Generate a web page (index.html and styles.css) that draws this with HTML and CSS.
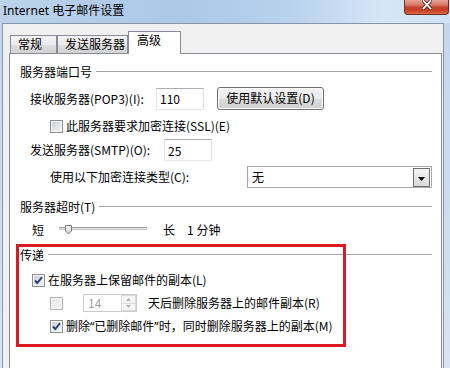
FILE: index.html
```html
<!DOCTYPE html>
<html lang="zh-CN">
<head>
    <meta charset="UTF-8">
    <meta name="viewport" content="width=device-width, initial-scale=1.0">
    <title>Internet 电子邮件设置</title>
    <link rel="stylesheet" href="styles.css">
</head>
<body>

<div class="window">
    <div class="titlebar">
        <span class="title">Internet 电子邮件设置</span>
        <span class="close-btn">
            <svg width="10" height="10" viewBox="0 0 10 10">
                <path d="M1.5 1 L8.5 8.5 M8.5 1 L1.5 8.5" stroke="#5b2219" stroke-width="3.4" stroke-linecap="square"/>
                <path d="M1.5 1 L8.5 8.5 M8.5 1 L1.5 8.5" stroke="#ffffff" stroke-width="1.8" stroke-linecap="square"/>
            </svg>
        </span>
    </div>

    <div class="client">
        <div class="tabs">
            <div class="tab tab-general">常规</div>
            <div class="tab tab-outgoing">发送服务器</div>
            <div class="tab tab-advanced active">高级</div>
        </div>

        <div class="panel">
            <div class="group-title">服务器端口号</div>

            <div class="row row-pop3">
                <span class="label-pop3">接收服务器(POP3)(I):</span>
                <input type="text" class="textbox" value="110">
                <span class="btn">使用默认设置(D)</span>
            </div>

            <div class="row row-ssl">
                <span class="check"></span>
                <span class="check-text">此服务器要求加密连接(SSL)(E)</span>
            </div>

            <div class="row row-smtp">
                <span class="label-smtp">发送服务器(SMTP)(O):</span>
                <input type="text" class="textbox" value="25">
            </div>

            <div class="row row-enc">
                <span class="label-enc">使用以下加密连接类型(C):</span>
                <div class="select">
                    <span class="select-value">无</span>
                    <span class="select-arrow">
                        <svg width="7" height="4" viewBox="0 0 7 4"><path d="M0 0 H7 L3.5 4 Z" fill="#000"/></svg>
                    </span>
                </div>
            </div>

            <div class="group-title group-timeout">服务器超时(T)</div>

            <div class="row row-slider">
                <span>短</span>
                <div class="slider">
                    <div class="slider-track"></div>
                    <svg class="slider-thumb" width="8" height="10" viewBox="0 0 8 10">
                        <defs>
                            <linearGradient id="thumbFill" x1="0" y1="0" x2="0" y2="1">
                                <stop offset="0" stop-color="#f4f4f4"/>
                                <stop offset="1" stop-color="#cfcfcf"/>
                            </linearGradient>
                        </defs>
                        <path d="M0.5 0.5 H6.5 V6 L3.5 9 L0.5 6 Z" fill="url(#thumbFill)" stroke="#7a7a7a"/>
                    </svg>
                </div>
                <span class="slider-long">长</span>
                <span class="slider-value">1 分钟</span>
            </div>

            <div class="group-title group-delivery">传递</div>

            <div class="row row-keep">
                <span class="check checked">
                    <svg width="11" height="11" viewBox="0 0 11 11"><path d="M2 5.5 L4.3 8 L9 2.2" fill="none" stroke="#2b3f7c" stroke-width="1.9"/></svg>
                </span>
                <span class="check-text">在服务器上保留邮件的副本(L)</span>
            </div>

            <div class="row row-days">
                <span class="check disabled"></span>
                <div class="spinner">
                    <span class="spinner-value">14</span>
                    <div class="spinner-buttons">
                        <span class="spin-up"><svg width="5" height="3" viewBox="0 0 5 3"><path d="M0 3 H5 L2.5 0 Z" fill="#b4b4b4"/></svg></span>
                        <span class="spin-down"><svg width="5" height="3" viewBox="0 0 5 3"><path d="M0 0 H5 L2.5 3 Z" fill="#b4b4b4"/></svg></span>
                    </div>
                </div>
                <span class="days-text">天后删除服务器上的邮件副本(R)</span>
            </div>

            <div class="row row-remove">
                <span class="check checked">
                    <svg width="11" height="11" viewBox="0 0 11 11"><path d="M2 5.5 L4.3 8 L9 2.2" fill="none" stroke="#2b3f7c" stroke-width="1.9"/></svg>
                </span>
                <span class="check-text">删除<span class="quote">“</span>已删除邮件<span class="quote">”</span>时，同时删除服务器上的副本(M)</span>
            </div>

            <!-- annotation box drawn over the delivery group -->
            <div class="highlight"></div>
        </div>
    </div>
</div>

</body>
</html>
```

FILE: styles.css
```css
body {
    margin: 0;
    font-family: "Noto Sans CJK SC", sans-serif;
    font-size: 12px;
    color: #000;
}
.window {
    width: 450px;
    height: 368px;
    overflow: hidden;
    display: flex;
    flex-direction: column;
    background: linear-gradient(to bottom, #c2d6ec, #d6e3f1);
}
.titlebar {
    height: 23px;
    flex-shrink: 0;
    display: flex;
    justify-content: space-between;
    align-items: flex-start;
    background: linear-gradient(to right, #bcd2ea 0%, #abc8e7 40%, #b9d2ec 65%, #d6e6f6 85%, #cfe0f2 100%);
}
.title {
    padding-left: 3px;
    line-height: 21px;
    font-family: "Noto Sans", "Noto Sans CJK SC", sans-serif;
}
.close-btn {
    width: 45px;
    height: 15px;
    margin-right: 1px;
    box-sizing: border-box;
    display: flex;
    justify-content: center;
    align-items: flex-start;
    border: 1px solid #6f3026;
    border-top: none;
    border-radius: 0 0 4px 4px;
    background: linear-gradient(to bottom, #e6a395 0%, #d77966 35%, #c43f27 55%, #cb4429 80%, #dd6a4c 100%);
}
.client {
    flex: 1;
    display: flex;
    flex-direction: column;
    margin: 0 6px 0 2px;
    border: 1px solid #8497ad;
    border-bottom: none;
    background-color: #f0f0f0;
}
.tabs {
    height: 29px;
    flex-shrink: 0;
    display: flex;
    align-items: flex-end;
    padding-left: 7px;
}
.tab {
    height: 18px;
    box-sizing: border-box;
    border: 1px solid #898c95;
    border-bottom: none;
    padding-left: 7px;
    line-height: 15px;
    background: linear-gradient(to bottom, #f3f3f3 0%, #ebebeb 50%, #dedede 51%, #d3d3d3 100%);
}
.tab-general {
    width: 47px;
}
.tab-outgoing {
    width: 71px;
}
.tab-advanced {
    width: 53px;
}
.tab.active {
    height: 23px;
    margin-bottom: -1px;
    padding-left: 8px;
    line-height: 16px;
    background: #fff;
    position: relative;
    z-index: 1;
}
.panel {
    flex: 1;
    margin: 0 1px 0 6px;
    border: 1px solid #898c95;
    border-bottom: none;
    background-color: #fff;
    padding: 10px 9px 0 10px;
    position: relative;
}
.group-title {
    display: flex;
    align-items: center;
    height: 16px;
    line-height: 16px;
}
.group-title::after {
    content: "";
    flex: 1;
    border-top: 1px solid #a5a5a5;
    margin-left: 4px;
    margin-top: -2px;
}
.group-timeout {
    margin-top: 11px;
}
.group-delivery {
    margin-top: 9px;
}
.row {
    display: flex;
    align-items: center;
    line-height: 16px;
}
.row-pop3 {
    height: 23px;
    margin-top: 7px;
    padding-left: 10px;
}
.label-pop3 {
    width: 126px;
}
.row-ssl {
    height: 16px;
    margin-top: 8px;
    padding-left: 30px;
}
.row-smtp {
    height: 22px;
    margin-top: 5px;
    padding-left: 10px;
}
.label-smtp {
    width: 134px;
}
.row-enc {
    height: 22px;
    margin-top: 5px;
    padding-left: 30px;
}
.label-enc {
    width: 197px;
}
.textbox {
    width: 48px;
    height: 22px;
    box-sizing: border-box;
    margin: 0;
    padding: 0 3px;
    border: 1px solid;
    border-color: #abadb3 #dbdfe6 #e3e9ef #e2e3ea;
    font-family: inherit;
    font-size: 12px;
    color: #000;
    outline: none;
}
.btn {
    width: 107px;
    height: 23px;
    box-sizing: border-box;
    margin-left: 13px;
    border: 1px solid #707070;
    border-radius: 3px;
    box-shadow: inset 0 0 0 1px #fbfbfb;
    background: linear-gradient(to bottom, #f2f2f2 0%, #ebebeb 50%, #dddddd 51%, #cfcfcf 100%);
    text-align: center;
    line-height: 20px;
}
.select {
    width: 185px;
    height: 22px;
    box-sizing: border-box;
    border: 1px solid #a7a9ad;
    display: flex;
    align-items: center;
    justify-content: space-between;
    padding: 0 1px 0 4px;
}
.select-arrow {
    width: 17px;
    height: 19px;
    box-sizing: border-box;
    border: 1px solid #6f6f6f;
    background: linear-gradient(to bottom, #f4f4f4, #d8d8d8);
    display: flex;
    align-items: center;
    justify-content: center;
    padding-top: 3px;
}
.check {
    width: 13px;
    height: 13px;
    flex-shrink: 0;
    box-sizing: border-box;
    border: 1px solid #8e8f8f;
    box-shadow: inset 0 0 0 1px #f6f6f6;
    background: linear-gradient(135deg, #c7cbd1 0%, #e6e7e9 60%, #f7f7f7 100%);
    display: flex;
    align-items: center;
    justify-content: center;
}
.check.disabled {
    border-color: #b4b4b4;
    background: linear-gradient(135deg, #e4e4e4, #f6f6f6);
}
.check-text {
    margin-left: 3px;
}
.quote {
    font-family: "Noto Sans", sans-serif;
}
.row-slider {
    height: 16px;
    margin-top: 7px;
    padding-left: 12px;
}
.slider {
    width: 88px;
    height: 10px;
    margin-left: 15px;
    position: relative;
}
.slider-track {
    margin-top: 2px;
    height: 3px;
    box-sizing: border-box;
    border: 1px solid #c4c4c4;
    border-top-color: #9c9c9c;
    background-color: #e8e8e8;
}
.slider-thumb {
    position: absolute;
    left: 6px;
    top: 0;
}
.slider-long {
    margin-left: 16px;
}
.slider-value {
    margin-left: 12px;
}
.row-keep {
    height: 16px;
    margin-top: 9px;
    padding-left: 12px;
}
.row-days {
    height: 18px;
    margin-top: 6px;
    padding-left: 30px;
}
.spinner {
    width: 54px;
    height: 18px;
    box-sizing: border-box;
    margin-left: 20px;
    border: 1px solid #c9cbd0;
    display: flex;
    justify-content: space-between;
    align-items: center;
    padding-left: 4px;
}
.spinner-value {
    color: #a0a0a0;
}
.spinner-buttons {
    width: 15px;
    height: 16px;
    display: flex;
    flex-direction: column;
}
.spinner-buttons span {
    flex: 1;
    box-sizing: border-box;
    border: 1px solid #dadada;
    background: #f4f4f4;
    display: flex;
    align-items: center;
    justify-content: center;
}
.spinner-buttons .spin-down {
    border-top: none;
}
.days-text {
    margin-left: 11px;
}
.row-remove {
    height: 16px;
    margin-top: 6px;
    padding-left: 30px;
}
.highlight {
    position: absolute;
    left: 6px;
    top: 190px;
    width: 330px;
    height: 103px;
    box-sizing: border-box;
    border: 3px solid #dc1a22;
}
```
